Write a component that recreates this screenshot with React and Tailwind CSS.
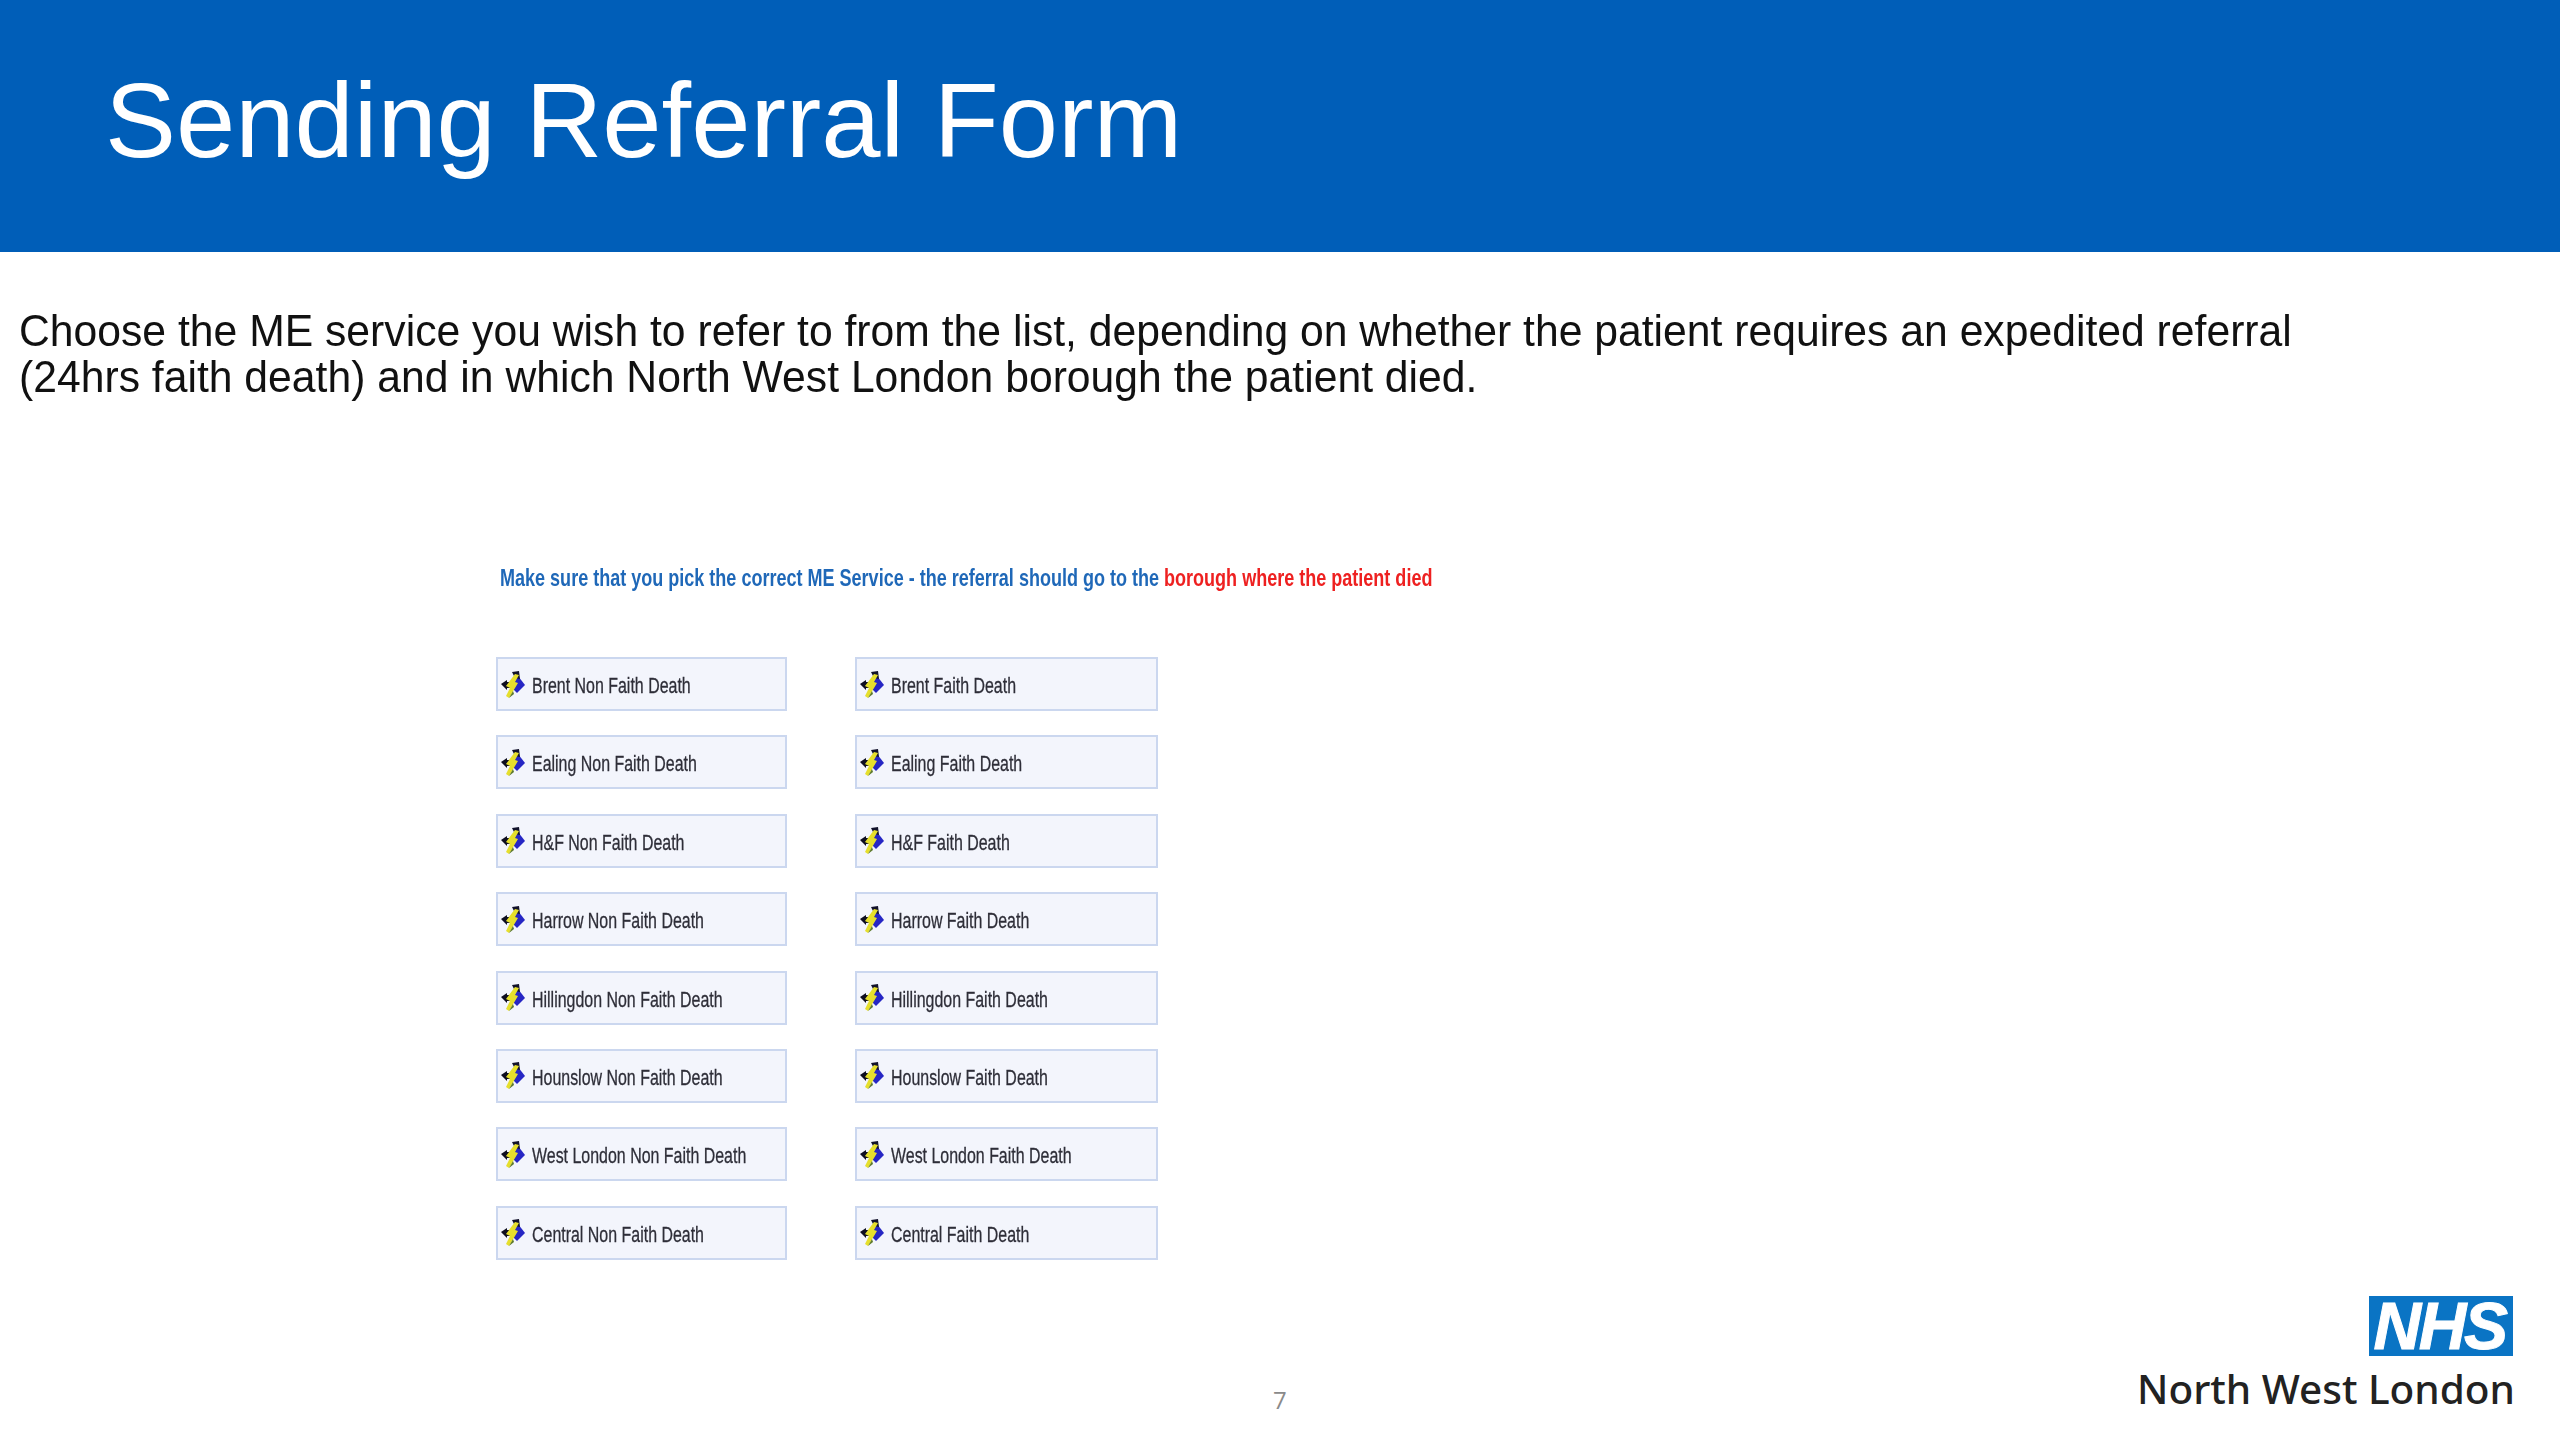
const rows = ["Brent", "Ealing", "H&F", "Harrow", "Hillingdon", "Hounslow", "West London", "Central"];

function Icon() {
  return (
    <svg width="24" height="27" viewBox="0 0 24 27" className="shrink-0">
      <path d="M12 7 L17 5 L24 14 L16 22 L12 18 Z" fill="#2626c4" />
      <path d="M0 13 L6 9 L6 11 L13 11 L13 17 L6 17 L6 19 Z" fill="#0e0e20" />
      <path d="M11 1 L18 0 L19 8 L14 7 Z" fill="#12122a" />
      <path d="M14 3 L18 4 L14 11 L17 12 L8 27 L5 25 L9 17 L5 15 Z" fill="#e6df2c" />
      <path d="M8 27 L12 20 L13 23 Z" fill="#5f7a2c" />
    </svg>
  );
}

function RefButton({ label }) {
  return (
    <div className="h-[54px] flex items-center pl-[3px] gap-[7px] bg-[#f3f5fc] border-2 border-[#cbd7ef] overflow-hidden">
      <Icon />
      <span className="inline-block pt-[3px] whitespace-nowrap origin-left scale-x-[0.725] text-[22px] text-[#2e2e38] blur-[0.5px] [-webkit-text-stroke:0.3px_#2e2e38] font-['Liberation_Sans',sans-serif]">
        {label}
      </span>
    </div>
  );
}

export default function App() {
  return (
    <div className="w-[2560px] h-[1440px] bg-white flex flex-col overflow-hidden font-['Liberation_Sans',sans-serif]">
      <header className="h-[252px] shrink-0 bg-[#005eb8] pl-[105px] pt-[49px]">
        <h1 className="text-[106.5px] leading-[144px] text-white font-normal whitespace-nowrap">Sending Referral Form</h1>
      </header>

      <p className="mt-[56px] ml-[19px] text-[44px] leading-[46px] text-[#111] whitespace-nowrap origin-left scale-x-[0.97]">
        Choose the ME service you wish to refer to from the list, depending on whether the patient requires an expedited referral
        <br />
        (24hrs faith death) and in which North West London borough the patient died.
      </p>

      <section className="ml-[496px] mt-[162px]">
        <div className="pl-[4px] h-[32px] flex items-center">
          <span className="inline-block whitespace-nowrap origin-left scale-x-[0.751] text-[24px] font-bold text-[#1f68b8] blur-[0.5px]">
            Make sure that you pick the correct ME Service - the referral should go to the{" "}
            <span className="text-[#ee2020]">borough where the patient died</span>
          </span>
        </div>
        <div className="mt-[63px] grid grid-cols-[291px_303px] gap-x-[68px] gap-y-[24.4px] w-fit">
          {rows.map((r) => [
            <RefButton key={r + "n"} label={`${r} Non Faith Death`} />,
            <RefButton key={r + "f"} label={`${r} Faith Death`} />,
          ])}
        </div>
      </section>

      <footer className="mt-auto relative flex items-end justify-end pr-[45px] pb-[28px]">
        <div className="flex flex-col items-end">
          <div className="mr-[2px] w-[144px] h-[60px] bg-[#0a74c4] flex items-center justify-center">
            <span className="text-[66px] leading-none font-bold italic text-white tracking-[-2.5px] pr-[3px] [-webkit-text-stroke:1px_#ffffff]">NHS</span>
          </div>
          <div className="mt-[10px] text-[40.5px] leading-[46px] font-medium text-[#222] whitespace-nowrap font-['Noto_Sans',sans-serif]">
            North West London
          </div>
        </div>
        <span className="absolute left-[1273px] bottom-[22px] text-[24px] text-[#8a8a8a] font-['Open_Sans',sans-serif]">7</span>
      </footer>
    </div>
  );
}
